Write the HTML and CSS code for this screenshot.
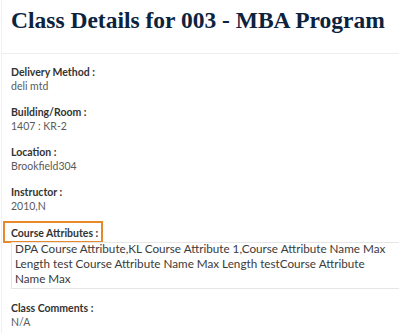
FILE: index.html
```html
<!DOCTYPE html>
<html>
<head>
<meta charset="utf-8">
<link rel="stylesheet" href="styles.css">
</head>
<body>
<div class="page">
  <header class="header">
    <h1 class="title">Class Details for 003 - MBA Program</h1>
  </header>
  <main class="details">
    <div class="field">
      <div class="label">Delivery Method :</div>
      <div class="value">deli mtd</div>
    </div>
    <div class="field">
      <div class="label">Building/Room :</div>
      <div class="value">1407 : KR-2</div>
    </div>
    <div class="field">
      <div class="label">Location :</div>
      <div class="value">Brookfield304</div>
    </div>
    <div class="field">
      <div class="label">Instructor :</div>
      <div class="value">2010,N</div>
    </div>
    <div class="field">
      <div class="label highlight">Course Attributes :</div>
      <div class="value boxed"><div class="boxed-text">DPA Course Attribute,KL Course Attribute 1,Course Attribute Name Max Length test Course Attribute Name Max Length testCourse Attribute Name Max</div></div>
    </div>
    <div class="field">
      <div class="label">Class Comments :</div>
      <div class="value">N/A</div>
    </div>
  </main>
</div>
</body>
</html>
```
FILE: styles.css
```css
html, body {
  margin: 0;
  padding: 0;
  background: #ffffff;
  overflow: hidden;
}
.page {
  border-left: 1px solid #f0f0f0;
  margin-left: 1px;
  height: 333px;
  box-sizing: border-box;
}
.header {
  border-bottom: 1px solid #eeeeee;
  padding: 5px 0 0 9px;
  height: 54px;
  box-sizing: border-box;
}
.title {
  margin: 0;
  font-family: "Liberation Serif", serif;
  font-weight: bold;
  font-size: 23.5px;
  line-height: 30px;
  color: #0c2340;
  white-space: nowrap;
}
.details {
  display: flex;
  flex-direction: column;
  gap: 12px;
  padding: 11px 0 0 9px;
  font-family: Lato, sans-serif;
}
.field {
  display: flex;
  flex-direction: column;
}
.label {
  font-size: 10.5px;
  font-weight: 700;
  color: #333333;
  line-height: 14px;
}
.value {
  font-size: 10.5px;
  color: #5a5a5a;
  line-height: 14px;
}
.highlight {
  align-self: flex-start;
  margin-left: -8px;
  margin-top: -4px;
  padding: 3px 3px 1px 6px;
  border: 2px solid #e8892b;
}
.boxed {
  margin-top: -1px;
  border: 1px solid #e6e6e6;
  border-right: none;
  padding: 0 6px 0 3px;
  font-size: 11.7px;
  line-height: 15px;
  color: #3a3a3a;
}
.boxed-text {
  margin: -2px 0 2px 0;
}
```
